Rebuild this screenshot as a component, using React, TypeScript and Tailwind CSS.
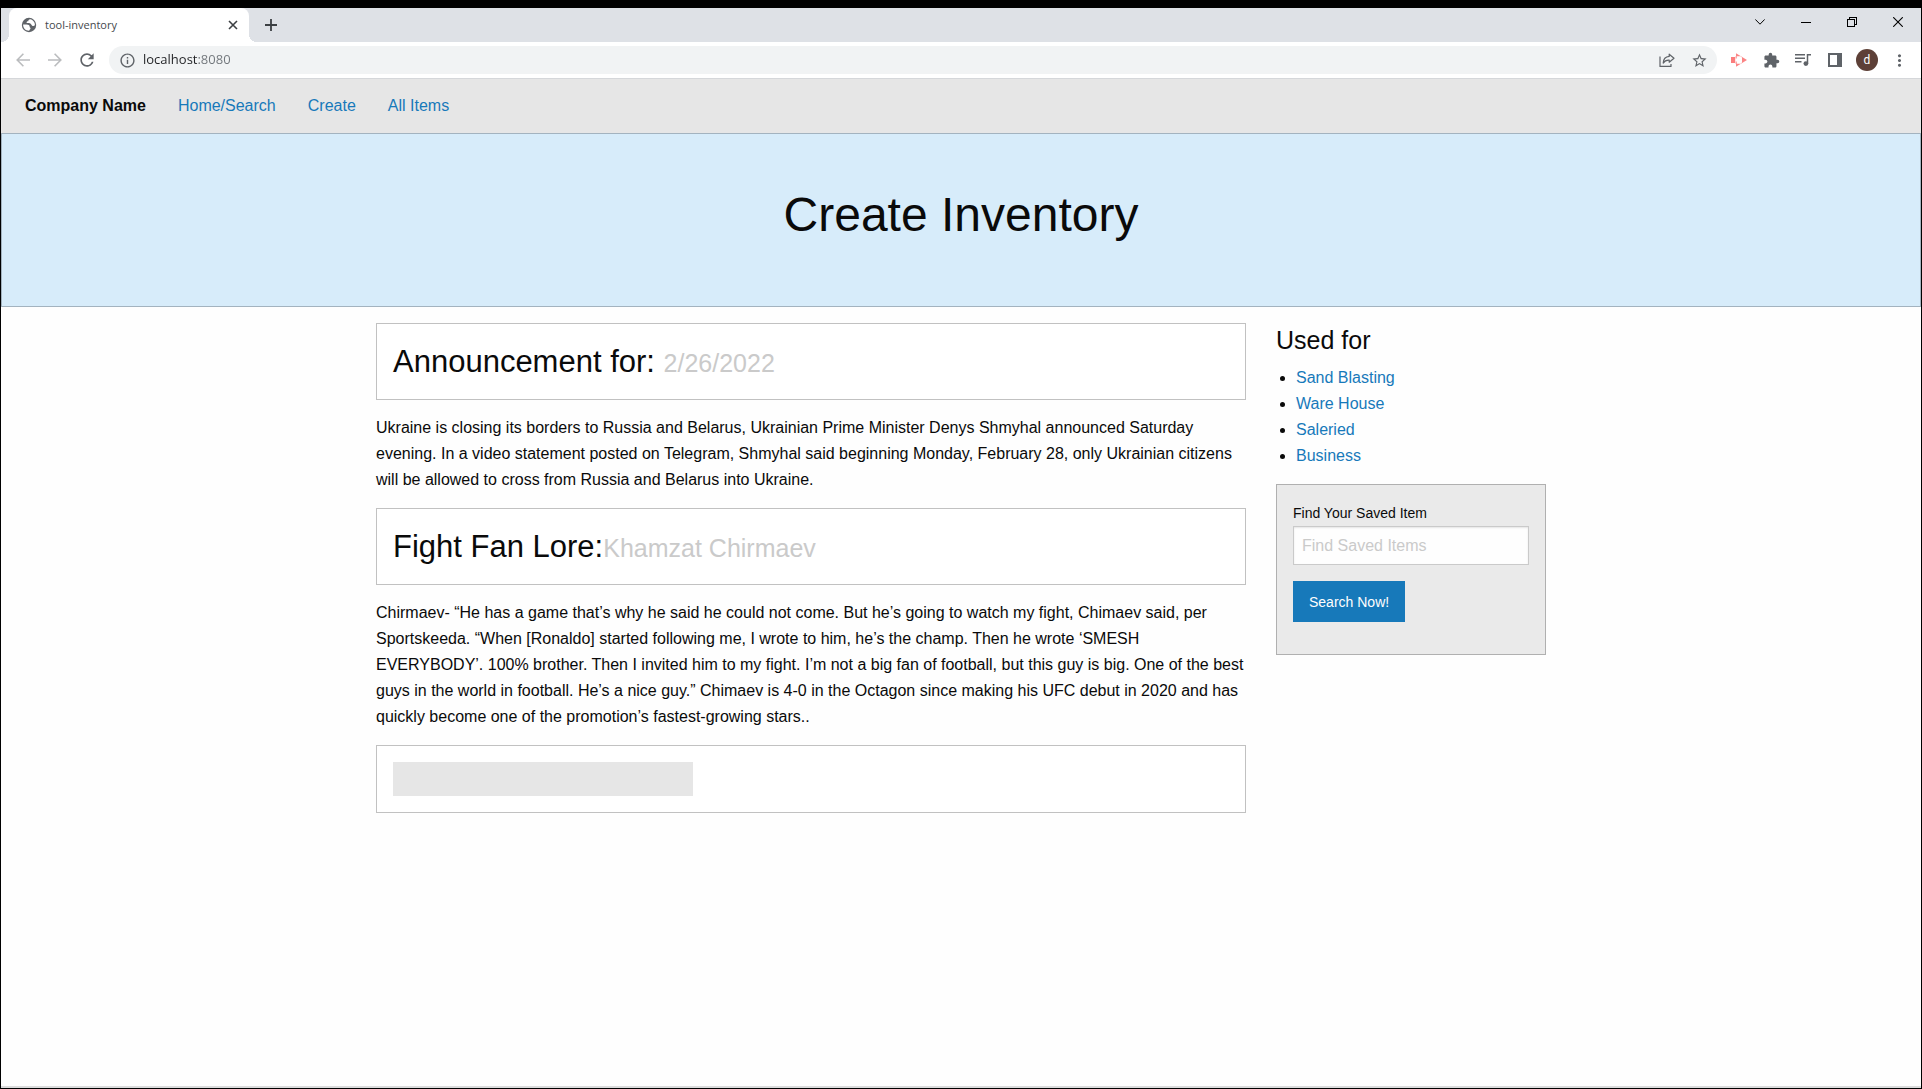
import type { ReactNode } from 'react';
import { MdExtension, MdInfoOutline, MdMoreVert, MdRefresh, MdStarBorder } from 'react-icons/md';

function IconButton({ label, children }: { label: string; children: ReactNode }) {
  return (
    <button
      type="button"
      aria-label={label}
      className="flex h-7 w-7 shrink-0 items-center justify-center rounded-full text-[#5f6368]"
    >
      {children}
    </button>
  );
}

function WindowButton({ label, children }: { label: string; children: ReactNode }) {
  return (
    <button type="button" aria-label={label} className="flex h-7 w-[46px] items-center justify-center text-black">
      {children}
    </button>
  );
}

function GlobeIcon() {
  return (
    <svg viewBox="0 0 16 16" className="h-4 w-4 shrink-0" aria-hidden="true">
      <circle cx="8" cy="8" r="7.2" fill="#5f6368" />
      <path
        d="M2.100 7.600h3.600c1.700 0 3 .9 3 2.200 0 .7.400.9.900 1.100-.2 1.600-1.200 1.300-1.400 2.900-3.600.2-6.100-2.700-6.100-6.200z"
        fill="#fff"
      />
      <path
        d="M9.300 2.200C7.500 2.500 7.300 3.300 7.300 4.300 5.900 4.300 5.400 4.900 5.700 6.100c1.400.1 2.900-.1 4 .7.900.7.900 2.100 2.200 2.200.9.100 1.200-.6 2-.5.300-3.200-1.900-5.700-4.600-6.300z"
        fill="#fff"
      />
    </svg>
  );
}

function TabStrip() {
  return (
    <div className="flex h-[34px] items-start bg-[#dee1e6]">
      <div className="relative ml-2 flex h-full w-60 items-center rounded-t-lg bg-white pr-2 pl-3">
        <span className="absolute bottom-0 -left-2 h-2 w-2 bg-[radial-gradient(circle_at_top_left,transparent_8px,#fff_8px)]" />
        <span className="absolute -right-2 bottom-0 h-2 w-2 bg-[radial-gradient(circle_at_top_right,transparent_8px,#fff_8px)]" />
        <GlobeIcon />
        <span className="ml-2 flex-1 font-['Open_Sans',sans-serif] text-[11px] text-[#45494d]">tool-inventory</span>
        <button type="button" aria-label="Close tab" className="flex h-4 w-4 items-center justify-center">
          <svg viewBox="0 0 10 10" className="h-[10px] w-[10px]" stroke="#3c4043" strokeWidth="1.6">
            <path d="M1 1l8 8M9 1l-8 8" />
          </svg>
        </button>
      </div>
      <button type="button" aria-label="New tab" className="ml-2 flex h-full w-7 items-center justify-center">
        <svg viewBox="0 0 12 12" className="h-3 w-3" stroke="#3c4043" strokeWidth="1.8">
          <path d="M6 0v12M0 6h12" />
        </svg>
      </button>
      <div className="ml-auto flex">
        <WindowButton label="Search tabs">
          <svg viewBox="0 0 10 6" className="h-[6px] w-[10px]" fill="none" stroke="currentColor">
            <path d="M.3.4L5 5.200 9.700.4" />
          </svg>
        </WindowButton>
        <WindowButton label="Minimize">
          <svg viewBox="0 0 10 10" className="h-[10px] w-[10px]" stroke="currentColor" shapeRendering="crispEdges">
            <path d="M0 5.500h10" />
          </svg>
        </WindowButton>
        <WindowButton label="Restore">
          <svg
            viewBox="0 0 10 10"
            className="h-[10px] w-[10px]"
            fill="none"
            stroke="currentColor"
            shapeRendering="crispEdges"
          >
            <path d="M.5 2.500h7v7h-7zM2.500 2.500v-2h7v7h-2" />
          </svg>
        </WindowButton>
        <WindowButton label="Close">
          <svg viewBox="0 0 10 10" className="h-[10px] w-[10px]" stroke="currentColor" strokeWidth="1.1">
            <path d="M.2.2l9.600 9.600M9.800.2L.2 9.800" />
          </svg>
        </WindowButton>
      </div>
    </div>
  );
}

function Toolbar() {
  return (
    <div className="flex items-center gap-1 border-b border-[#d5d7da] bg-white px-2 py-1">
      <IconButton label="Back">
        <svg viewBox="0 0 14 14" className="h-[14px] w-[14px]" fill="none" stroke="#babcbe" strokeWidth="1.6">
          <path d="M14 7H1.500M7.400.8L1.200 7l6.200 6.200" />
        </svg>
      </IconButton>
      <IconButton label="Forward">
        <svg viewBox="0 0 14 14" className="h-[14px] w-[14px]" fill="none" stroke="#babcbe" strokeWidth="1.6">
          <path d="M0 7h12.500M6.600.8L12.800 7l-6.200 6.200" />
        </svg>
      </IconButton>
      <IconButton label="Reload">
        <MdRefresh size={20} />
      </IconButton>
      <div className="ml-1 flex h-7 flex-1 items-center gap-0.5 rounded-full bg-[#f1f3f4] px-1">
        <IconButton label="View site information">
          <MdInfoOutline size={17} />
        </IconButton>
        <input
          type="text"
          aria-label="Address"
          defaultValue="localhost:8080"
          className="min-w-0 flex-1 bg-[linear-gradient(to_right,#202124_55px,#70757a_55px)] bg-clip-text font-['Open_Sans',sans-serif] text-[13px] text-transparent outline-none"
        />
        <div className="flex gap-1">
          <IconButton label="Share this page">
            <svg
              viewBox="0 0 16 14"
              className="h-[14px] w-4"
              fill="none"
              stroke="currentColor"
              strokeWidth="1.2"
              strokeLinejoin="round"
            >
              <path d="M1 3.500v9.900h11v-2.500" />
              <path d="M10.200 1.200L15 5.200l-4.800 4V7.200C7.500 7 5.600 7.900 4.200 10.100 4.400 6.200 6.600 3.700 10.200 3.400z" />
            </svg>
          </IconButton>
          <IconButton label="Bookmark this tab">
            <MdStarBorder size={17} />
          </IconButton>
        </div>
      </div>
      <div className="ml-1 flex gap-1">
        <IconButton label="Screen recorder">
          <svg viewBox="0 0 16 14" className="h-[14px] w-4" aria-hidden="true">
            <path d="M0 4h4.200v6H0z" fill="#fb7d7d" />
            <path d="M5 .2L16 7 5 13.800V10.800H9.500L11 9.500v-5L9.500 3.200H5z" fill="#fb8585" />
            <path d="M5.200 3v2.500M5.200 8.500V11" stroke="#fb8585" strokeWidth="1" />
          </svg>
        </IconButton>
        <IconButton label="Extensions">
          <MdExtension size={17} />
        </IconButton>
        <IconButton label="Media controls">
          <svg viewBox="0 0 16 14" className="h-[14px] w-4" aria-hidden="true">
            <path d="M0 1.700h10M0 5.200h10M0 8.700h6.500" stroke="currentColor" strokeWidth="1.400" />
            <path d="M12.500 10.500V1.700H16" fill="none" stroke="currentColor" strokeWidth="1.500" />
            <circle cx="10.900" cy="10.600" r="2.400" fill="currentColor" />
          </svg>
        </IconButton>
        <IconButton label="Side panel">
          <svg viewBox="0 0 14 14" className="h-[14px] w-[14px]" aria-hidden="true">
            <path d="M0 0h14v14H0zM2 2v10h7V2z" fill="currentColor" fillRule="evenodd" />
          </svg>
        </IconButton>
        <IconButton label="Profile">
          <span className="flex h-[22px] w-[22px] items-center justify-center rounded-full bg-[#5d4037] font-[Roboto,sans-serif] text-xs text-white">
            d
          </span>
        </IconButton>
        <IconButton label="Menu">
          <MdMoreVert size={19} />
        </IconButton>
      </div>
    </div>
  );
}

const menu = ['Home/Search', 'Create', 'All Items'];
const uses = ['Sand Blasting', 'Ware House', 'Saleried', 'Business'];

function HeadingBox({ children }: { children: ReactNode }) {
  return (
    <div className="border border-[#c1c1c1] bg-white p-4">
      <h2 className="text-[31px] leading-[43px]">{children}</h2>
    </div>
  );
}

function Paragraph({ children }: { children: ReactNode }) {
  return <p className="my-[15px] leading-[26px]">{children}</p>;
}

export default function App() {
  return (
    <div className="flex min-h-screen flex-col border-x border-t-8 border-b border-black bg-[#fefefe] font-['Liberation_Sans',Arial,sans-serif] text-base text-[#0a0a0a]">
      <header>
        <TabStrip />
        <Toolbar />
      </header>

      <div className="flex-1 border-b-2 border-[#dcdcdc]">
        <nav className="flex h-[54px] items-center gap-8 bg-[#e6e6e6] px-6">
          <strong>Company Name</strong>
          {menu.map((item) => (
            <a key={item} href="#" className="text-[#1779ba]">
              {item}
            </a>
          ))}
        </nav>

        <div className="border border-[#a3b3bf] bg-[#d7ecfa] pt-12 pb-[58px] text-center">
          <h1 className="text-5xl leading-[66px]">Create Inventory</h1>
        </div>

        <div className="mx-auto mt-4 flex max-w-[1200px]">
          <main className="w-3/4 px-[15px]">
            <HeadingBox>
              Announcement for: <small className="text-[25px] leading-none text-[#cacaca]">2/26/2022</small>
            </HeadingBox>
            <Paragraph>
              Ukraine is closing its borders to Russia and Belarus, Ukrainian Prime Minister Denys Shmyhal announced
              Saturday evening. In a video statement posted on Telegram, Shmyhal said beginning Monday, February 28,
              only Ukrainian citizens will be allowed to cross from Russia and Belarus into Ukraine.
            </Paragraph>
            <HeadingBox>
              Fight Fan Lore:<small className="text-[25px] leading-none text-[#cacaca]">Khamzat Chirmaev</small>
            </HeadingBox>
            <Paragraph>
              Chirmaev- “He has a game that’s why he said he could not come. But he’s going to watch my fight, Chimaev
              said, per Sportskeeda. “When [Ronaldo] started following me, I wrote to him, he’s the champ. Then he
              wrote ‘SMESH EVERYBODY’. 100% brother. Then I invited him to my fight. I’m not a big fan of football, but
              this guy is big. One of the best guys in the world in football. He’s a nice guy.” Chimaev is 4-0 in the
              Octagon since making his UFC debut in 2020 and has quickly become one of the promotion’s fastest-growing
              stars..
            </Paragraph>
            <div className="border border-[#c1c1c1] bg-white p-4">
              <div className="h-[34px] w-[300px] bg-[#e6e6e6]" />
            </div>
          </main>

          <aside className="w-1/4 px-[15px]">
            <h3 className="mb-[7px] text-[25px] leading-[35px]">Used for</h3>
            <ul className="mb-[15px] ml-5 list-disc leading-[26px]">
              {uses.map((use) => (
                <li key={use}>
                  <a href="#" className="text-[#1779ba]">
                    {use}
                  </a>
                </li>
              ))}
            </ul>
            <form className="border border-[#b0b0b0] bg-[#eaeaea] p-4" onSubmit={(e) => e.preventDefault()}>
              <label htmlFor="saved-item" className="block text-sm leading-[25px]">
                Find Your Saved Item
              </label>
              <input
                id="saved-item"
                type="text"
                placeholder="Find Saved Items"
                className="mb-4 block h-[39px] w-full border border-[#cacaca] bg-[#fefefe] px-2 shadow-[inset_0_1px_2px_rgba(10,10,10,0.1)] placeholder:text-[#cacaca]"
              />
              <button type="submit" className="mb-4 block h-[41px] bg-[#1779ba] px-4 text-sm text-[#fefefe]">
                Search Now!
              </button>
            </form>
          </aside>
        </div>
      </div>
    </div>
  );
}
